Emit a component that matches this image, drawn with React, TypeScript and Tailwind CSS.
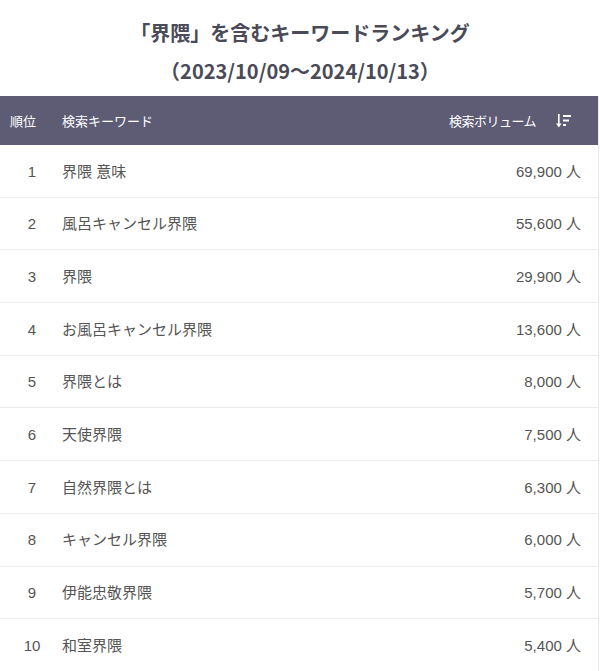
const rows = [
  { rank: 1, keyword: "界隈 意味", volume: "69,900" },
  { rank: 2, keyword: "風呂キャンセル界隈", volume: "55,600" },
  { rank: 3, keyword: "界隈", volume: "29,900" },
  { rank: 4, keyword: "お風呂キャンセル界隈", volume: "13,600" },
  { rank: 5, keyword: "界隈とは", volume: "8,000" },
  { rank: 6, keyword: "天使界隈", volume: "7,500" },
  { rank: 7, keyword: "自然界隈とは", volume: "6,300" },
  { rank: 8, keyword: "キャンセル界隈", volume: "6,000" },
  { rank: 9, keyword: "伊能忠敬界隈", volume: "5,700" },
  { rank: 10, keyword: "和室界隈", volume: "5,400" },
];

function SortIcon() {
  return (
    <svg width="16" height="16" viewBox="0 0 16 16" fill="currentColor">
      <rect x="2" y="1" width="1.6" height="11" />
      <path d="M0 10.5 L2.8 14.5 L5.6 10.5 Z" />
      <rect x="7" y="2" width="8" height="2" />
      <rect x="7" y="6.5" width="6" height="2" />
      <rect x="7" y="11" width="3" height="2" />
    </svg>
  );
}

export default function App() {
  return (
    <div className="w-[600px] bg-white font-['Liberation_Sans','Noto_Sans_CJK_JP',sans-serif]">
      <div className="pt-[14px] pb-[6px] text-center font-['Noto_Sans_CJK_JP',sans-serif] font-bold text-[20px] leading-[38px] text-[#4a4a58]">
        <p>「界隈」を含むキーワードランキング</p>
        <p>（2023/10/09～2024/10/13）</p>
      </div>
      <div className="w-[599px] border-r border-[#e8e8e8]">
        <div className="flex items-center h-[49px] bg-[#5d5c74] text-white text-[13px] font-['Noto_Sans_CJK_JP',sans-serif]">
          <div className="w-[62px] pl-[10px]">順位</div>
          <div className="flex-1">検索キーワード</div>
          <div className="flex items-center gap-[20px] pr-[26px]">
            <span className="tracking-[-0.5px]">検索ボリューム</span>
            <SortIcon />
          </div>
        </div>
        {rows.map((row) => (
          <div
            key={row.rank}
            className="flex items-center h-[52.7px] pt-[2px] border-b border-[#ededed] text-[15px] text-[#555]"
          >
            <div className="w-[62px] text-center pl-[2px]">{row.rank}</div>
            <div className="flex-1">{row.keyword}</div>
            <div className="pr-[17px]">{row.volume} 人</div>
          </div>
        ))}
      </div>
    </div>
  );
}
